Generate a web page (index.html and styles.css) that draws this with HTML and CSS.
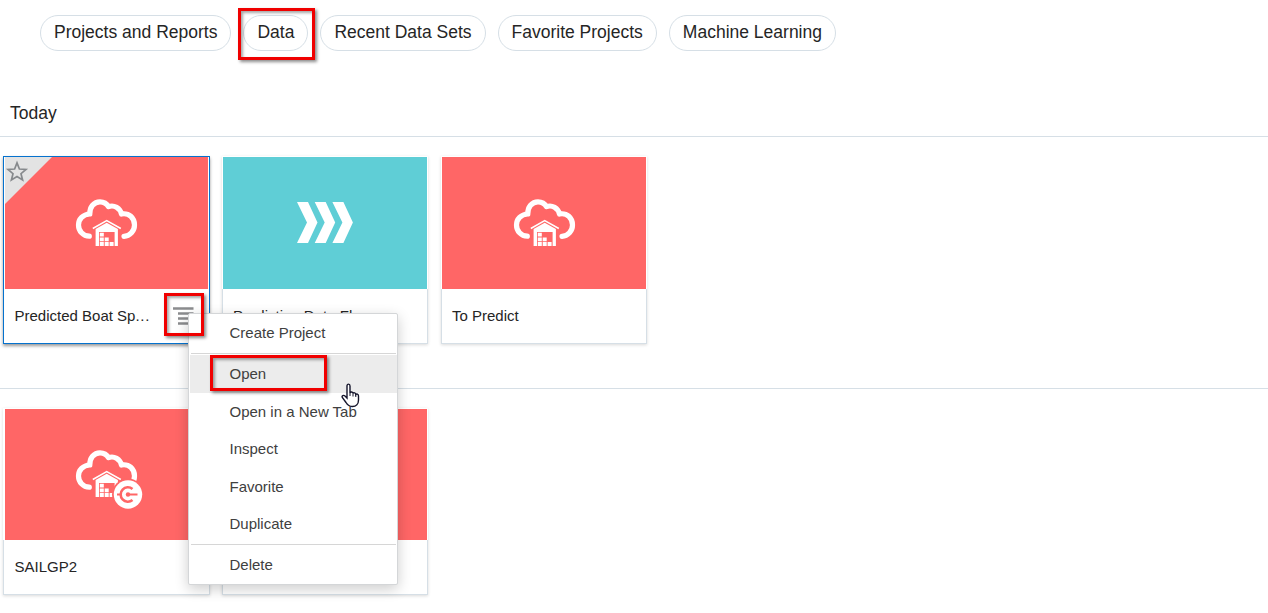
FILE: index.html
```html
<!DOCTYPE html>
<html lang="en">
<head>
<meta charset="utf-8">
<title>Data</title>
<link rel="stylesheet" href="styles.css">
</head>
<body>
<svg class="defs" aria-hidden="true">
  <symbol id="cloud" viewBox="0 0 79 64" overflow="visible">
    <path d="M22.3 45.2C16 45.2 11.5 40 11.5 34C11.5 28 16 23.3 22.8 23C22.5 16 27 10.8 33 10.8C37 10.8 40 13 41.5 15.7C47 13.5 53 17 54.5 23C62 21.5 67.5 27 67.5 34C67.5 40 63 45.2 57 45.3" fill="none" stroke="#fff" stroke-width="5.2" stroke-linecap="round" stroke-linejoin="round"/>
    <path d="M25.8 37.5L39.7 29.6L53.8 37.5" fill="none" stroke="#fff" stroke-width="1.5"/>
    <path fill="#fff" d="M28.6 38L39.7 31.8L50.9 38V55H47.6V41H32V55H28.6ZM32.8 41.7h4v3.8h-4zM32.8 46.4h4v3.8h-4zM37.7 46.4h4v3.8h-4zM32.8 51.1h4V55h-4zM37.7 51.1h4V55h-4zM42.6 51.1h4V55h-4z"/>
  </symbol>
</svg>

<nav class="pills">
  <a class="pill">Projects and Reports</a>
  <a class="pill">Data</a>
  <a class="pill">Recent Data Sets</a>
  <a class="pill">Favorite Projects</a>
  <a class="pill">Machine Learning</a>
</nav>

<section class="group group-today">
  <h2 class="group-title">Today</h2>
  <div class="cards">
    <article class="card card-selected">
      <div class="thumb thumb-red"><svg class="icon"><use href="#cloud"/></svg></div>
      <div class="caption"><span class="name">Predicted Boat Sp<span class="dots">...</span></span>
        <svg class="actions" viewBox="0 0 21 18"><path d="M0 1.5h20.5M5 6.5h15.5M5 11.5h15.5M5 16.5h15.5" stroke="#8b8c8e" stroke-width="2.4"/></svg>
      </div>
      <svg class="star" viewBox="0 0 48 48"><path d="M0 0H47L0 47Z" fill="#e3e3e3"/><path d="M12 5.9L14.4 12L21 12.5L16 16.7L17.6 23L12 19.5L6.4 23L8 16.7L3 12.5L9.6 12Z" fill="none" stroke="#86898c" stroke-width="1.7"/></svg>
    </article>
    <article class="card">
      <div class="thumb thumb-teal"><svg class="chevrons" viewBox="0 0 56 41"><path fill="#fff" d="M0 0H11L20.5 20.5L11 41H0L10 20.5ZM17.7 0H28.7L38.2 20.5L28.7 41H17.7L27.7 20.5ZM35.4 0H46.4L55.9 20.5L46.4 41H35.4L45.4 20.5Z"/></svg></div>
      <div class="caption"><span class="name">Prediction Data Fl...</span></div>
    </article>
    <article class="card">
      <div class="thumb thumb-red"><svg class="icon"><use href="#cloud"/></svg></div>
      <div class="caption"><span class="name">To Predict</span></div>
    </article>
  </div>
</section>

<section class="group group-earlier">
  <div class="cards">
    <article class="card card-first">
      <div class="thumb thumb-red"><svg class="icon" viewBox="0 0 79 64"><use href="#cloud" width="79" height="64"/>
        <circle cx="61" cy="52.5" r="16" fill="#f66"/><circle cx="61" cy="52.5" r="14.2" fill="#fff"/>
        <g fill="none" stroke="#f66">
          <path stroke-width="2.6" d="M65.500 47A7.200 7.200 0 1 0 65.500 58"/>
          <path stroke-width="1.900" d="M61 52.500H70.500M50 52.500H54"/>
          <circle cx="61" cy="52.500" r="2.200" fill="#f66" stroke="none"/>
        </g></svg></div>
      <div class="caption"><span class="name">SAILGP2</span></div>
    </article>
    <article class="card">
      <div class="thumb thumb-red"></div>
      <div class="caption"></div>
    </article>
  </div>
</section>

<div class="menu">
  <div class="item">Create Project</div>
  <div class="sep"></div>
  <div class="item item-hover">Open</div>
  <div class="item">Open in a New Tab</div>
  <div class="item">Inspect</div>
  <div class="item">Favorite</div>
  <div class="item">Duplicate</div>
  <div class="sep"></div>
  <div class="item">Delete</div>
</div>

<div class="mark mark-data"></div>
<div class="mark mark-actions"></div>
<div class="mark mark-open"></div>
<svg class="cursor" viewBox="0 0 19 25"><path d="M6 15V3C6 .5 9 .5 9 3V10C9.5 8.5 12 8.7 12 10.5C12.6 9.3 14.7 9.6 14.8 11.5C15.6 10.5 17.5 11 17.5 13V17C17.5 21 15 23.5 11.5 23.5C8 23.5 6.5 22 5 19.5L1.3 14.5C.5 12.8 2.5 11.7 4 13Z" fill="#fff" stroke="#15152b" stroke-width="1.4"/><path d="M9 10V13M12 10.5V13.5M14.8 11.5V14" stroke="#15152b"/></svg>
</body>
</html>
```
FILE: styles.css
```css
body {
  margin: 0;
  width: 1268px;
  height: 613px;
  position: relative;
  overflow: hidden;
  background: #fff;
  color: #252525;
  font-family: "Liberation Sans", Arial, sans-serif;
}
.defs { position: absolute; width: 0; height: 0; }
.pills { display: flex; gap: 12px; padding: 15px 0 0 40px; }
.pill {
  box-sizing: border-box;
  height: 36px;
  padding: 0 13px;
  border: 1px solid #d6dfe6;
  border-radius: 18px;
  font-size: 17.5px;
  line-height: 33px;
  white-space: nowrap;
}
.group-title {
  box-sizing: border-box;
  height: 86px;
  margin: 0;
  padding: 51px 0 0 10px;
  border-bottom: 1px solid #d6dfe6;
  font-size: 17.5px;
  font-weight: 400;
  line-height: 22px;
}
.cards { display: flex; gap: 13px; padding: 19px 0 0 3px; }
.group-earlier { margin-top: 44px; border-top: 1px solid #d6dfe6; }
.card {
  position: relative;
  box-sizing: border-box;
  width: 206px;
  height: 188px;
  padding-top: 1px;
  box-shadow: 0 1px 3px rgba(0, 0, 0, .15);
}
.thumb {
  display: flex;
  align-items: center;
  justify-content: center;
  height: 132px;
  margin: 0 1px;
}
.group-earlier .thumb { height: 131px; }
.thumb-red { background: #f66; }
.thumb-teal { background: #5fced6; }
.icon { width: 79px; height: 64px; overflow: visible; }
.chevrons { width: 56px; height: 41px; margin-bottom: 1px; }
.caption {
  display: flex;
  align-items: center;
  justify-content: space-between;
  box-sizing: border-box;
  height: 55px;
  padding: 0 15px 2px 10px;
  border: solid #d6dfe6;
  border-width: 0 1px 1px;
  font-size: 15px;
}
.group-earlier .card { height: 187px; }
.group-earlier .icon { margin-bottom: 1px; }
.name { white-space: nowrap; }
.dots { letter-spacing: .7px; }
.actions { width: 21px; height: 18px; }
.card-selected, .card-first { width: 207px; margin-right: -1px; }
.card-selected { border: 1px solid #0572ce; padding: 0 1px; box-shadow: 0 2px 3px rgba(0, 0, 0, .4); }
.card-selected .thumb { margin: 0; }
.card-selected .caption { border: 0; height: 54px; padding: 0 14px 0 9.5px; }
.card-selected .name { padding-bottom: 2px; }
.card-first .thumb { margin: 0 1px 0 2px; }
.card-first .icon { margin-left: -1px; }
.card-first .caption { padding-left: 10.5px; }
.star { position: absolute; left: 1px; top: 0; width: 48px; height: 48px; }
.menu {
  position: absolute;
  left: 188px;
  top: 313px;
  box-sizing: border-box;
  width: 210px;
  height: 272px;
  padding-left: 1px;
  border: 1px solid #d4d6d8;
  border-radius: 2px;
  background: #fff;
  box-shadow: 0 4px 14px rgba(0, 0, 0, .2);
  color: #404040;
  font-size: 15px;
}
.item { height: 37.5px; padding-left: 39.5px; line-height: 38px; }
.item-hover { background: #ececec; }
.sep { height: 1px; margin: 1.5px 1px 1px 1px; background: #d6d6d6; }
.mark {
  position: absolute;
  box-sizing: border-box;
  border: 3px solid #f00000;
  box-shadow: 2px 2px 3px rgba(0, 0, 0, .45), inset 2px 2px 3px rgba(0, 0, 0, .35);
}
.mark-data { left: 238px; top: 8px; width: 77px; height: 52px; }
.mark-actions { left: 164px; top: 293px; width: 40px; height: 43px; }
.mark-open { left: 210px; top: 355px; width: 117px; height: 36px; }
.cursor { position: absolute; left: 341px; top: 383px; width: 19px; height: 25px; }
```
